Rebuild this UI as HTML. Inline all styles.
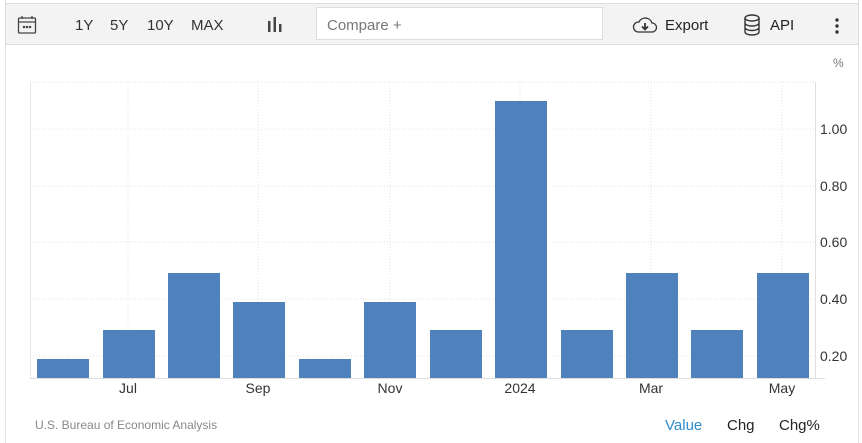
<!DOCTYPE html>
<html><head><meta charset="utf-8"><style>
body{margin:0;width:862px;height:443px;background:#fff;font-family:"Liberation Sans",sans-serif;position:relative;overflow:hidden}
.pg{position:absolute;left:5px;top:0;width:852px;height:443px;border-left:1px solid #e6e6e6;border-right:1px solid #e6e6e6}
.tb{position:absolute;left:5px;top:3px;width:852px;height:40px;background:#f3f3f3;border:1px solid #ddd}
.t{position:absolute;font-size:15px;color:#333;top:17px}
.cmp{position:absolute;left:316px;top:7px;width:287px;height:33px;background:#fff;border:1px solid #ddd;box-sizing:border-box;font-size:15px;color:#777;padding:9px 10px}
</style></head><body>
<div class="pg"></div>
<div class="tb"></div>
<svg style="position:absolute;left:17px;top:15px" width="20" height="20" viewBox="0 0 20 20" fill="none" stroke="#444" stroke-width="1.3"><rect x="1.5" y="3" width="17" height="15" rx="1"/><line x1="1.5" y1="7" x2="18.5" y2="7"/><line x1="5" y1="1" x2="5" y2="4"/><line x1="15" y1="1" x2="15" y2="4"/><circle cx="7" cy="12" r=".6" fill="#444"/><circle cx="10" cy="12" r=".6" fill="#444"/><circle cx="13" cy="12" r=".6" fill="#444"/></svg>
<div class="t" style="left:75px">1Y</div>
<div class="t" style="left:110px">5Y</div>
<div class="t" style="left:147px">10Y</div>
<div class="t" style="left:191px">MAX</div>
<svg style="position:absolute;left:267px;top:17px" width="16" height="16"><rect x="1" y="4" width="2.5" height="11" fill="#444"/><rect x="6.5" y="0" width="2.5" height="15" fill="#444"/><rect x="12" y="7" width="2.5" height="8" fill="#444"/></svg>
<div class="cmp">Compare +</div>
<svg style="position:absolute;left:632px;top:16px" width="26" height="18" viewBox="0 0 26 18" fill="none" stroke="#333" stroke-width="1.3"><path d="M6 16 H20 A4.5 4.5 0 0 0 20 7 A7 7 0 0 0 7 6 A5 5 0 0 0 6 16 Z"/><path d="M13 7 V13 M10 10.5 L13 13.5 L16 10.5" stroke-width="1.8"/></svg>
<div class="t" style="left:665px;color:#222">Export</div>
<svg style="position:absolute;left:743px;top:14px" width="18" height="22" viewBox="0 0 18 22" fill="none" stroke="#333" stroke-width="1.4"><ellipse cx="9" cy="4" rx="7" ry="3"/><path d="M2 4 V18 A7 3 0 0 0 16 18 V4 M2 9 A7 3 0 0 0 16 9 M2 13.5 A7 3 0 0 0 16 13.5"/></svg>
<div class="t" style="left:770px;color:#222">API</div>
<svg style="position:absolute;left:834px;top:17px" width="6" height="18"><circle cx="3" cy="3" r="1.7" fill="#333"/><circle cx="3" cy="9" r="1.7" fill="#333"/><circle cx="3" cy="15" r="1.7" fill="#333"/></svg>
<svg style="position:absolute;left:0;top:0" width="862" height="443" font-family="Liberation Sans,sans-serif">
<g stroke="#e2e2e2" stroke-dasharray="1,2">
<line x1="30" y1="82" x2="815" y2="82"/><line x1="30" y1="129" x2="815" y2="129"/><line x1="30" y1="186" x2="815" y2="186"/><line x1="30" y1="242" x2="815" y2="242"/><line x1="30" y1="299" x2="815" y2="299"/><line x1="30" y1="356" x2="815" y2="356"/>
<line x1="128" y1="82" x2="128" y2="378"/><line x1="258" y1="82" x2="258" y2="378"/><line x1="390" y1="82" x2="390" y2="378"/><line x1="520" y1="82" x2="520" y2="378"/><line x1="651" y1="82" x2="651" y2="378"/><line x1="782" y1="82" x2="782" y2="378"/>
</g>
<line x1="30.5" y1="82" x2="30.5" y2="378" stroke="#e6e6e6"/>
<line x1="815.5" y1="82" x2="815.5" y2="378" stroke="#e0e0e0"/>
<g fill="#4f81bd">
<rect x="37" y="359" width="52" height="19"/><rect x="103" y="330" width="52" height="48"/><rect x="168" y="273" width="52" height="105"/><rect x="233" y="302" width="52" height="76"/><rect x="299" y="359" width="52" height="19"/><rect x="364" y="302" width="52" height="76"/><rect x="430" y="330" width="52" height="48"/><rect x="495" y="101" width="52" height="277"/><rect x="561" y="330" width="52" height="48"/><rect x="626" y="273" width="52" height="105"/><rect x="691" y="330" width="52" height="48"/><rect x="757" y="273" width="52" height="105"/>
</g>
<line x1="30" y1="378.5" x2="825" y2="378.5" stroke="#ddd"/>
<g font-size="14" fill="#333">
<text x="820" y="134">1.00</text><text x="820" y="191">0.80</text><text x="820" y="247">0.60</text><text x="820" y="304">0.40</text><text x="820" y="361">0.20</text>
<g text-anchor="middle"><text x="128" y="393">Jul</text><text x="258" y="393">Sep</text><text x="390" y="393">Nov</text><text x="520" y="393">2024</text><text x="651" y="393">Mar</text><text x="782" y="393">May</text></g>
</g>
<text x="833" y="67" font-size="12" fill="#777">%</text>
<text x="35" y="429" font-size="12" fill="#888">U.S. Bureau of Economic Analysis</text>
<text x="665" y="430" font-size="15" fill="#2d8ccd">Value</text>
<text x="727" y="430" font-size="15" fill="#222">Chg</text>
<text x="779" y="430" font-size="15" fill="#222">Chg%</text>
</svg>
</body></html>
